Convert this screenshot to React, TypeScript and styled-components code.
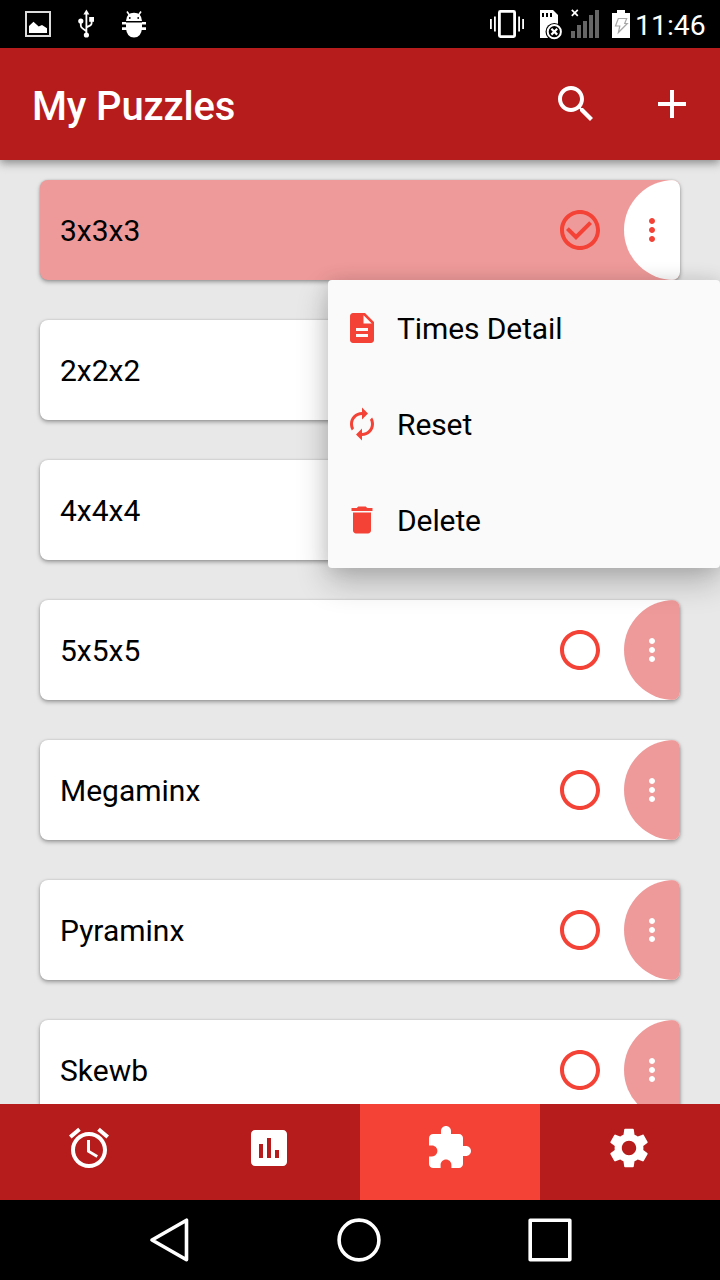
import React from 'react';
import styled, { createGlobalStyle } from 'styled-components';

const GlobalStyle = createGlobalStyle`
  * { box-sizing: border-box; }
  body {
    margin: 0;
    font-family: Roboto, 'Liberation Sans', sans-serif;
    background: #000;
  }
`;

const red = '#b71c1c';
const accent = '#f44336';
const pink = '#ef9a9a';

const paths = {
  search:
    'M15.5 14h-.79l-.28-.27C15.41 12.59 16 11.11 16 9.5 16 5.91 13.09 3 9.5 3S3 5.91 3 9.5 5.91 16 9.5 16c1.61 0 3.09-.59 4.23-1.57l.27.28v.79l5 4.99L20.49 19l-4.99-5zm-6 0C7.01 14 5 11.99 5 9.5S7.01 5 9.5 5 14 7.01 14 9.5 11.99 14 9.5 14z',
  add: 'M19 13h-6v6h-2v-6H5v-2h6V5h2v6h6v2z',
  more:
    'M12 8c1.1 0 2-.9 2-2s-.9-2-2-2-2 .9-2 2 .9 2 2 2zm0 2c-1.1 0-2 .9-2 2s.9 2 2 2 2-.9 2-2-.9-2-2-2zm0 6c-1.1 0-2 .9-2 2s.9 2 2 2 2-.9 2-2-.9-2-2-2z',
  unchecked:
    'M12 2C6.48 2 2 6.48 2 12s4.48 10 10 10 10-4.48 10-10S17.52 2 12 2zm0 18c-4.42 0-8-3.58-8-8s3.58-8 8-8 8 3.58 8 8-3.58 8-8 8z',
  checked:
    'M16.59 7.58L10 14.17l-3.59-3.58L5 12l5 5 8-8zM12 2C6.48 2 2 6.48 2 12s4.48 10 10 10 10-4.48 10-10S17.52 2 12 2zm0 18c-4.42 0-8-3.58-8-8s3.58-8 8-8 8 3.58 8 8-3.58 8-8 8z',
  description:
    'M14 2H6c-1.1 0-1.99.9-1.99 2L4 20c0 1.1.89 2 1.99 2H18c1.1 0 2-.9 2-2V8l-6-6zm2 16H8v-2h8v2zm0-4H8v-2h8v2zm-3-5V3.5L18.5 9H13z',
  renew:
    'M12 6v3l4-4-4-4v3c-4.42 0-8 3.58-8 8 0 1.57.46 3.03 1.24 4.26L6.7 14.8c-.45-.83-.7-1.79-.7-2.8 0-3.31 2.69-6 6-6zm6.76 1.74L17.3 9.2c.44.84.7 1.79.7 2.8 0 3.31-2.69 6-6 6v-3l-4 4 4 4v-3c4.42 0 8-3.58 8-8 0-1.57-.46-3.03-1.24-4.26z',
  trash: 'M6 19c0 1.1.9 2 2 2h8c1.1 0 2-.9 2-2V7H6v12zM19 4h-3.5l-1-1h-5l-1 1H5v2h14V4z',
  alarm:
    'M22 5.72l-4.6-3.86-1.29 1.53 4.6 3.86L22 5.72zM7.88 3.39L6.6 1.86 2 5.71l1.29 1.53 4.59-3.85zM12.5 8H11v6l4.75 2.85.75-1.23-4-2.37V8zM12 4c-4.97 0-9 4.03-9 9s4.02 9 9 9c4.97 0 9-4.03 9-9s-4.03-9-9-9zm0 16c-3.87 0-7-3.13-7-7s3.13-7 7-7 7 3.13 7 7-3.13 7-7 7z',
  chart:
    'M19 3H5c-1.1 0-2 .9-2 2v14c0 1.1.9 2 2 2h14c1.1 0 2-.9 2-2V5c0-1.1-.9-2-2-2zM9 17H7v-7h2v7zm4 0h-2V7h2v10zm4 0h-2v-4h2v4z',
  puzzle:
    'M20.5 11H19V7c0-1.1-.9-2-2-2h-4V3.5C13 2.12 11.88 1 10.5 1S8 2.12 8 3.5V5H4c-1.1 0-1.99.9-1.99 2v3.8H3.5c1.49 0 2.7 1.21 2.7 2.7s-1.21 2.7-2.7 2.7H2V20c0 1.1.9 2 2 2h3.8v-1.5c0-1.49 1.21-2.7 2.7-2.7 1.49 0 2.7 1.21 2.7 2.7V22H17c1.1 0 2-.9 2-2v-4h1.5c1.38 0 2.5-1.12 2.5-2.5S21.88 11 20.5 11z',
  settings:
    'M19.14,12.94c0.04-0.3,0.06-0.61,0.06-0.94c0-0.32-0.02-0.64-0.07-0.94l2.03-1.58c0.18-0.14,0.23-0.41,0.12-0.61l-1.92-3.32c-0.12-0.22-0.37-0.29-0.59-0.22l-2.39,0.96c-0.5-0.38-1.03-0.7-1.62-0.94L14.4,2.81c-0.04-0.24-0.24-0.41-0.48-0.41h-3.84c-0.24,0-0.43,0.17-0.47,0.41L9.25,5.35C8.66,5.59,8.12,5.92,7.63,6.29L5.24,5.33c-0.22-0.08-0.47,0-0.59,0.22L2.74,8.87C2.62,9.08,2.66,9.34,2.86,9.48l2.03,1.58C4.84,11.36,4.8,11.69,4.8,12s0.02,0.64,0.07,0.94l-2.03,1.58c-0.18,0.14-0.23,0.41-0.12,0.61l1.92,3.32c0.12,0.22,0.37,0.29,0.59,0.22l2.39-0.96c0.5,0.38,1.03,0.7,1.62,0.94l0.36,2.54c0.05,0.24,0.24,0.41,0.48,0.41h3.84c0.24,0,0.44-0.17,0.47-0.41l0.36-2.54c0.59-0.24,1.13-0.56,1.62-0.94l2.39,0.96c0.22,0.08,0.47,0,0.59-0.22l1.92-3.32c0.12-0.22,0.07-0.47-0.12-0.61L19.14,12.94zM12,15.6c-1.98,0-3.6-1.62-3.6-3.6s1.62-3.6,3.6-3.6s3.6,1.62,3.6,3.6S13.98,15.6,12,15.6z',
};

type IconName = keyof typeof paths;

const Svg = styled.svg`
  display: block;
  flex: none;
  fill: currentColor;
`;

const Icon = ({ name, size }: { name: IconName; size: number }) => (
  <Svg width={size} height={size} viewBox="0 0 24 24">
    <path d={paths[name]} />
  </Svg>
);

const Screen = styled.div`
  display: flex;
  flex-direction: column;
  width: 720px;
  height: 1280px;
  overflow: hidden;
`;

const StatusBar = styled.div`
  display: flex;
  justify-content: space-between;
  height: 48px;
  padding: 0 14px 0 25px;
  flex: none;
  background: #000;
  color: #fff;
`;

const StatusGroup = styled.div<{ $gap: number }>`
  display: flex;
  align-items: center;
  gap: ${(p) => p.$gap}px;
`;

const Clock = styled.span`
  width: 71px;
  margin-left: -7px;
  padding-top: 4px;
  font-size: 28.4px;
  line-height: 48px;
  white-space: nowrap;
`;

const Toolbar = styled.header`
  position: relative;
  z-index: 1;
  display: flex;
  align-items: center;
  height: 112px;
  padding: 0 24px 0 32px;
  flex: none;
  background: ${red};
  color: #fff;
  box-shadow: 0 3px 9px rgba(0, 0, 0, 0.42);
`;

const Title = styled.h1`
  flex: 1;
  margin: 0;
  padding-top: 6px;
  font-size: 40px;
  font-weight: 500;
  line-height: 48px;
  letter-spacing: -0.15px;
`;

const Actions = styled.div`
  display: flex;
  gap: 48px;
`;

const List = styled.main`
  display: flex;
  flex-direction: column;
  gap: 40px;
  flex: 1;
  min-height: 0;
  padding: 20px 40px 0;
  overflow: hidden;
  background: #e8e8e8;
`;

const CardSlot = styled.div`
  position: relative;
  flex: none;
`;

const Card = styled.div<{ $active?: boolean }>`
  display: flex;
  align-items: center;
  height: 100px;
  border-radius: 8px;
  overflow: hidden;
  background: ${(p) => (p.$active ? pink : '#fff')};
  box-shadow: 0 2px 4px rgba(0, 0, 0, 0.34), 0 0 2px rgba(0, 0, 0, 0.16);
  color: ${accent};
`;

const CardName = styled.span`
  flex: 1;
  padding: 2px 0 0 20px;
  font-size: 30px;
  line-height: 36px;
  color: #000;
`;

const MoreButton = styled.div<{ $active?: boolean }>`
  display: flex;
  align-items: center;
  justify-content: center;
  width: 56px;
  height: 100px;
  margin-left: 20px;
  border-radius: 50px 0 0 50px;
  background: ${(p) => (p.$active ? '#fff' : pink)};
  color: ${(p) => (p.$active ? accent : '#fff')};
`;

const Menu = styled.div`
  position: absolute;
  z-index: 2;
  top: 100px;
  right: -40px;
  width: 392px;
  border-radius: 4px;
  background: #fafafa;
  box-shadow: 0 14px 32px rgba(0, 0, 0, 0.24), 0 0 18px rgba(0, 0, 0, 0.1);
`;

const MenuItem = styled.div`
  display: flex;
  align-items: center;
  gap: 17px;
  height: 96px;
  padding-left: 16px;
  color: ${accent};
`;

const MenuLabel = styled.span`
  padding-top: 2px;
  font-size: 30px;
  line-height: 36px;
  letter-spacing: -0.1px;
  color: #000;
`;

const Tabs = styled.nav`
  position: relative;
  z-index: 3;
  display: grid;
  grid-template-columns: repeat(4, 1fr);
  height: 96px;
  flex: none;
  background: ${red};
  color: #fff;
`;

const Tab = styled.div<{ $active?: boolean }>`
  display: flex;
  justify-content: center;
  padding: 20px 2px 0 0;
  background: ${(p) => (p.$active ? accent : 'transparent')};
`;

const SystemBar = styled.div`
  display: grid;
  grid-template-columns: 190px 191px 48px;
  align-items: center;
  height: 80px;
  padding-left: 145px;
  flex: none;
  background: #000;
`;

const Outline = styled.svg`
  display: block;
  fill: none;
  stroke: #fff;
  stroke-width: 3.6;
  stroke-linejoin: round;
`;

const puzzles = ['3x3x3', '2x2x2', '4x4x4', '5x5x5', 'Megaminx', 'Pyraminx', 'Skewb'];

const menu: { icon: IconName; label: string }[] = [
  { icon: 'description', label: 'Times Detail' },
  { icon: 'renew', label: 'Reset' },
  { icon: 'trash', label: 'Delete' },
];

const tabs: IconName[] = ['alarm', 'chart', 'puzzle', 'settings'];

const Notifications = () => (
  <StatusGroup $gap={27}>
    <Svg width="26" height="48" viewBox="25 0 26 48">
      <path d="M26 12h24v24H26z" fill="none" stroke="#dcdcdc" strokeWidth="2" />
      <path d="M29 33v-7l4.5-4.2 5.2 4.6 3.3-1.4 5 3.3V33z" />
    </Svg>
    <Svg width="16" height="48" viewBox="78 0 16 48">
      <path d="M86.4 9.5l3 5h-6z" />
      <circle cx="86.4" cy="35" r="2.6" />
      <circle cx="80.8" cy="21" r="2.6" />
      <path d="M89.2 17h4.8v4.8h-4.8z" />
      <path
        d="M86.4 13v21M80.8 21v4.5q0 1.6 1.4 2.6l4.2 3.2M91.6 20v3.2q0 1.5-1.3 2.2l-3.9 2"
        fill="none"
        stroke="#fff"
        strokeWidth="1.8"
      />
    </Svg>
    <Svg width="26" height="48" viewBox="121 0 26 48">
      <path d="M126 21q.3-8 8-8.2 7.7.2 8 8.2z" />
      <path d="M127 11.5l2.4 3.5M141 11.5l-2.4 3.5" stroke="#fff" strokeWidth="1.6" />
      <path d="M126 22.6h16v6q-.8 9-8 9t-8-9z" />
      <path d="M122 23.2h4M142 23.2h4M122 28.6h5M141 28.6h5" stroke="#fff" strokeWidth="2.6" />
      <circle cx="129.8" cy="18" r=".9" fill="#000" />
      <circle cx="138.2" cy="18" r=".9" fill="#000" />
    </Svg>
  </StatusGroup>
);

const SystemStatus = () => (
  <StatusGroup $gap={9}>
    <Svg width="35" height="48" viewBox="490 0 35 48">
      <rect x="499.4" y="11.4" width="15.2" height="25.2" rx="1" fill="none" stroke="#fff" strokeWidth="2.8" />
      <path d="M490 19h1.8v10H490zM494 16.5h1.8v15H494zM518.2 16.5h1.8v15h-1.8zM522.2 19h1.8v10h-1.8z" />
    </Svg>
    <Svg width="28" height="48" viewBox="534 0 28 48">
      <path d="M540 10h13l5 5V38h-18z" />
      <path d="M542 13h2v4h-2zM546 13h2v4h-2zM550 13h2v4h-2z" fill="#000" />
      <circle cx="554.3" cy="31.7" r="8.8" fill="#000" />
      <circle cx="554.3" cy="31.7" r="6.6" fill="none" stroke="#fff" strokeWidth="2" />
      <path d="M551.4 28.8l5.8 5.8M557.2 28.8l-5.8 5.8" stroke="#fff" strokeWidth="2.2" />
    </Svg>
    <Svg width="29" height="48" viewBox="571 0 29 48">
      <path d="M571 31h4v7h-4zM577 25h4v13h-4zM583 21h4v17h-4zM589 15h4v23h-4zM595 10h4v28h-4z" fill="#666" />
      <path d="M571.8 9.8l6 6M577.8 9.8l-6 6" stroke="#fff" strokeWidth="1.7" />
    </Svg>
    <Svg width="24" height="48" viewBox="609 0 24 48">
      <path d="M612 13h5v-3h8v3h5v25h-18z" />
      <path
        d="M618.3 18.5h8.4l-2 5h2.6l-8.9 9 1.4-6.5h-4.3z"
        fill="none"
        stroke="#a8a8a8"
        strokeWidth="1.2"
      />
    </Svg>
    <Clock>11:46</Clock>
  </StatusGroup>
);

export default function App() {
  return (
    <>
      <GlobalStyle />
      <Screen>
        <StatusBar>
          <Notifications />
          <SystemStatus />
        </StatusBar>
        <Toolbar>
          <Title>My Puzzles</Title>
          <Actions>
            <Icon name="search" size={48} />
            <Icon name="add" size={48} />
          </Actions>
        </Toolbar>
        <List>
          {puzzles.map((name, i) => {
            const active = i === 0;
            return (
              <CardSlot key={name}>
                <Card $active={active}>
                  <CardName>{name}</CardName>
                  <Icon name={active ? 'checked' : 'unchecked'} size={48} />
                  <MoreButton $active={active}>
                    <Icon name="more" size={36} />
                  </MoreButton>
                </Card>
                {active && (
                  <Menu>
                    {menu.map((item) => (
                      <MenuItem key={item.label}>
                        <Icon name={item.icon} size={36} />
                        <MenuLabel>{item.label}</MenuLabel>
                      </MenuItem>
                    ))}
                  </Menu>
                )}
              </CardSlot>
            );
          })}
        </List>
        <Tabs>
          {tabs.map((name) => (
            <Tab key={name} $active={name === 'puzzle'}>
              <Icon name={name} size={48} />
            </Tab>
          ))}
        </Tabs>
        <SystemBar>
          <Outline width="48" height="48" viewBox="145 1216 48 48">
            <path d="M152 1240l34.5-19.8v39.6z" />
          </Outline>
          <Outline width="48" height="48" viewBox="335 1216 48 48">
            <circle cx="359" cy="1240" r="19.9" />
          </Outline>
          <Outline width="48" height="48" viewBox="526 1216 48 48">
            <rect x="530.2" y="1220.2" width="39.6" height="39.6" />
          </Outline>
        </SystemBar>
      </Screen>
    </>
  );
}
